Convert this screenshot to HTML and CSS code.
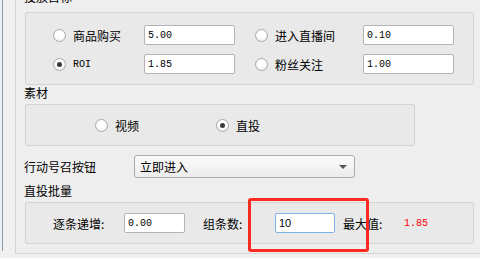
FILE: index.html
```html
<!DOCTYPE html>
<html lang="zh-CN">
    <head>
        <meta charset="UTF-8">
        <title>投放设置</title>
        <link rel="stylesheet" href="styles.css">
    </head>
    <body>
        <div class="window">
            <div class="panel">
                <div class="title first">投放目标</div>
                <div class="group target">
                    <label class="choice"><span class="radio"></span>商品购买</label>
                    <input class="field" type="text" value="5.00">
                    <label class="choice"><span class="radio"></span>进入直播间</label>
                    <input class="field" type="text" value="0.10">
                    <label class="choice"><span class="radio checked"></span><span class="mono">ROI</span></label>
                    <input class="field" type="text" value="1.85">
                    <label class="choice"><span class="radio"></span>粉丝关注</label>
                    <input class="field" type="text" value="1.00">
                </div>
                <div class="title">素材</div>
                <div class="group material">
                    <label class="choice video"><span class="radio"></span>视频</label>
                    <label class="choice direct"><span class="radio checked"></span>直投</label>
                </div>
                <div class="cta-row">
                    <span class="cta-label">行动号召按钮</span>
                    <div class="combo">
                        <span>立即进入</span>
                        <span class="arrow"></span>
                    </div>
                </div>
                <div class="title batch-title">直投批量</div>
                <div class="group batch">
                    <span class="lbl lbl-step">逐条递增:</span>
                    <input class="field small" type="text" value="0.00">
                    <span class="lbl lbl-count">组条数:</span>
                    <input class="field small focus" type="text" value="10">
                    <span class="lbl lbl-max">最大值:</span>
                    <span class="maxval">1.85</span>
                    <div class="highlight"></div>
                </div>
            </div>
        </div>
    </body>
</html>
```
FILE: styles.css
```css
* { box-sizing: border-box; }
html, body {
    margin: 0;
    height: 100%;
}
body {
    background-color: #f0f0f0;
    font-family: "Noto Sans CJK SC", sans-serif;
    font-size: 12px;
    color: #000;
    overflow: hidden;
}
.window {
    margin-left: 2px;
    border-left: 1px solid #8b9db5;
    padding-left: 12px;
    height: 258px;
}
.panel {
    margin-top: -7px;
    border-left: 1px solid #d6d6d6;
    border-bottom: 1px solid #d6d6d6;
    padding: 0 0 9px 8px;
    background-color: #eeeeee;
}
.title {
    height: 19px;
    line-height: 16px;
}
.title.first {
    line-height: 8px;
}
.group {
    margin-left: 1px;
    border: 1px solid #d3d3d3;
    border-radius: 2px;
    background-color: #e9e9e9;
}
.target {
    width: 449px;
    display: grid;
    grid-template-columns: 91px 111px 108px 91px;
    row-gap: 9px;
    padding: 12px 0 10px 27px;
}
.choice {
    display: flex;
    align-items: center;
    height: 20px;
}
.radio {
    width: 13px;
    height: 13px;
    border: 1px solid #a9a9a9;
    border-radius: 50%;
    background: radial-gradient(circle at 50% 40%, #ffffff 40%, #e6e6e6 100%);
    margin-right: 7px;
    display: flex;
    align-items: center;
    justify-content: center;
}
.radio.checked::after {
    content: "";
    width: 5px;
    height: 5px;
    border-radius: 50%;
    background: #3a3a3a;
}
.mono {
    font-family: "Liberation Mono", monospace;
    font-size: 10px;
}
.field {
    width: 91px;
    height: 20px;
    border: 1px solid #b4b4b4;
    border-radius: 2px;
    background: #fff;
    padding: 0 3px;
    font-family: "Liberation Mono", monospace;
    font-size: 10px;
    color: #000;
    outline: none;
}
.material {
    width: 390px;
    height: 42px;
    display: flex;
    align-items: center;
    padding-left: 69px;
}
.material .direct { margin-left: 77px; }
.cta-row {
    display: flex;
    align-items: center;
    margin-top: 9px;
    height: 23px;
}
.cta-label { width: 110px; }
.combo {
    width: 221px;
    height: 23px;
    border: 1px solid #acacac;
    border-radius: 3px;
    background: linear-gradient(#fbfbfb, #ececec);
    display: flex;
    align-items: center;
    justify-content: space-between;
    padding: 0 7px 0 5px;
}
.arrow {
    width: 0;
    height: 0;
    border-left: 4px solid transparent;
    border-right: 4px solid transparent;
    border-top: 4px solid #555;
}
.batch-title {
    margin-top: 2px;
    height: 22px;
    line-height: 22px;
}
.batch {
    position: relative;
    width: 449px;
    height: 42px;
    display: flex;
    align-items: center;
    padding-left: 27px;
}
.lbl { display: inline-block; }
.lbl-step { width: 71px; }
.lbl-count { width: 72px; margin-left: 18px; }
.lbl-max { width: 61px; margin-left: 8px; }
.field.small { width: 61px; }
.field.focus {
    width: 60px;
    border-color: #7db2e8;
    font-family: "Liberation Sans", sans-serif;
    font-size: 11px;
}
.maxval {
    color: #ff0000;
    font-family: "Liberation Mono", monospace;
    font-size: 10px;
}
.highlight {
    position: absolute;
    left: 222px;
    top: -5px;
    width: 121px;
    height: 54px;
    border: 3px solid #ff2a1f;
    border-radius: 3px;
}
```
